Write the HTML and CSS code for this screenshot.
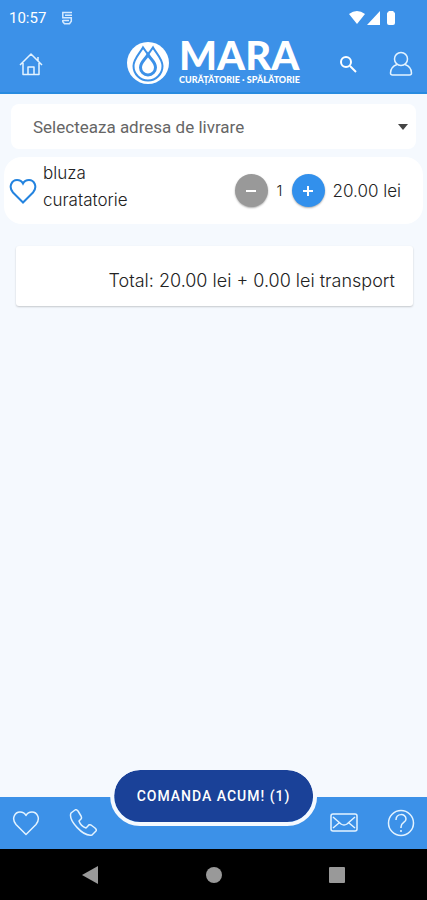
FILE: index.html
```html
<!DOCTYPE html>
<html lang="ro">
<head>
<meta charset="utf-8">
<meta name="viewport" content="width=device-width, initial-scale=1">
<title>Mara</title>
<link rel="stylesheet" href="styles.css">
</head>
<body>
<header class="header">
  <div class="status">
    <span class="status-left">
      <span class="clock">10:57</span>
      <svg width="12" height="14" viewBox="0 0 12 14" fill="none" stroke="#d5eaff" stroke-width="1.500"><path d="M11 1.500H1.800v5.300h8.500v3.500L8.500 12.800h-5L1.800 10.800V9M4 4.200h7M1.800 9.500H8"/></svg>
    </span>
    <svg width="50" height="16" viewBox="0 0 50 16" fill="currentColor"><path d="M0 4Q8-2 16 4L8 14ZM18 15 31 1V15ZM38 3.500q0-1.500 1.500-1.500V1h5v1q1.500 0 1.500 1.500V13q0 2-2 2h-4q-2 0-2-2Z"/></svg>
  </div>
  <div class="toolbar">
    <a class="icon home" href="#" aria-label="Acasa"><svg width="24" height="24" viewBox="0 0 24 24" class="line"><path d="M1 13 12 2 23 13M4 11v11.500h16V11M19 9V5M9 22v-7h6v7"/></svg></a>
    <a class="brand" href="#">
      <svg width="42" height="42" viewBox="0 0 42 42"><circle cx="21" cy="21" r="21" fill="#fff"/><path class="drop" d="M21 12.500 16 5.500C13 11 6.500 17 6.500 24a14.500 14.500 0 0 0 29 0C35.500 17 29 11 26 5.500Z"/><path class="drop inner" d="M21 12.500C18 18 13.500 20 13.500 25.500a7.500 7.500 0 0 0 15 0C28.500 20 24 18 21 12.500Z"/></svg>
      <span class="wordmark"><span class="name">MARA</span><span class="tagline">CURĂȚĂTORIE · SPĂLĂTORIE</span></span>
    </a>
    <span class="actions">
      <button class="icon" aria-label="Cauta"><svg width="18" height="18" viewBox="0 0 18 18" class="bold"><circle cx="7" cy="7" r="5"/><path d="m11 11 6 6"/></svg></button>
      <a class="icon" href="#" aria-label="Cont"><svg width="24" height="26" viewBox="0 0 24 26" class="line"><circle cx="12" cy="8" r="6.500"/><path d="M8 13.500C4 15 1.500 18 1.500 22q0 2 2 2h17q2 0 2-2c0-4-2.500-7-6.500-8.500"/></svg></a>
    </span>
  </div>
</header>

<main class="content">
  <div class="address">
    <select aria-label="Adresa de livrare"><option>Selecteaza adresa de livrare</option></select>
    <svg width="10" height="6" viewBox="0 0 10 6"><path d="M0 0h10L5 6Z"/></svg>
  </div>
  <section class="item">
    <button class="favorite" aria-label="Favorit"><svg width="28" height="26" viewBox="0 0 28 26"><path d="M14 24.500 4 14.500C-1 8.500 3 2 8 2c3 0 5 1.500 6 3.500C15 3.500 17 2 20 2c5 0 9 6.500 4 12.500Z"/></svg></button>
    <div class="item-name"><span>bluza</span><span>curatatorie</span></div>
    <div class="quantity">
      <button class="round minus" aria-label="Scade"><svg width="12" height="12" viewBox="0 0 12 12"><path d="M1 6h10"/></svg></button>
      <output>1</output>
      <button class="round plus" aria-label="Adauga"><svg width="12" height="12" viewBox="0 0 12 12"><path d="M1 6h10M6 1v10"/></svg></button>
    </div>
    <span class="price">20.00 lei</span>
  </section>
  <section class="total">Total: 20.00 lei + 0.00 lei transport</section>
</main>

<footer>
  <nav class="tabs">
    <span class="tab-group">
      <a class="icon" href="#" aria-label="Favorite"><svg width="28" height="26" viewBox="0 0 28 26" class="line"><path d="M14 24.500 4 14.500C-1 8.500 3 2 8 2c3 0 5 1.500 6 3.500C15 3.500 17 2 20 2c5 0 9 6.500 4 12.500Z"/></svg></a>
      <a class="icon" href="#" aria-label="Telefon"><svg width="28" height="28" viewBox="0 0 28 28" class="line"><path d="M6 1 2 4C-1 11 14 28 23 26l4-4q1-1-1-3l-4-3q-2-1-3 1l-2 2c-3-1-6-4-7-7l2-2q1-1 0-3L9 2Q7 0 6 1Z"/></svg></a>
    </span>
    <span class="tab-group">
      <a class="icon" href="#" aria-label="Mesaje"><svg width="28" height="20" viewBox="0 0 28 20" class="line"><rect x="1" y="1" width="26" height="17" rx="2"/><path d="m3 4 8 7q3 2 6 0l8-7M3 15l6-5M25 15l-6-5"/></svg></a>
      <a class="icon" href="#" aria-label="Ajutor"><svg width="28" height="28" viewBox="0 0 28 28" class="line"><circle cx="14" cy="14" r="12.500"/><path d="M9 11c0-7 10-7 10-1 0 4-5 3-5 8v1M14 21v2"/></svg></a>
    </span>
    <button class="order">COMANDA ACUM! (1)</button>
  </nav>
  <div class="system">
    <svg width="18" height="20" viewBox="0 0 18 20"><path d="M17 1v18L1 10Z"/></svg>
    <svg width="18" height="18" viewBox="0 0 18 18"><circle cx="9" cy="9" r="8"/></svg>
    <svg width="18" height="18" viewBox="0 0 18 18"><rect x="1" y="1" width="16" height="16" rx="1"/></svg>
  </div>
</footer>
</body>
</html>
```
FILE: styles.css
```css
* { box-sizing: border-box; }
body {
  margin: 0;
  min-height: 100vh;
  display: flex;
  flex-direction: column;
  background: #f5f9fe;
  color: #222;
  font-family: Inter, "Liberation Sans", sans-serif;
  font-size: 17px;
  font-weight: 300;
}
button { border: 0; padding: 0; background: none; color: inherit; font: inherit; }
a { color: inherit; text-decoration: none; }
svg { display: block; flex: none; }

.header { background: #3c91e8; color: #fff; border-bottom: 2px solid #288be0; }
.status {
  height: 36px;
  padding: 0 28px 0 9px;
  display: flex;
  align-items: center;
  justify-content: space-between;
  font-family: Roboto, sans-serif;
  font-weight: 400;
}
.status-left { display: flex; align-items: center; gap: 15px; }
.clock { font-size: 15px; }
.toolbar {
  height: 56px;
  padding: 0 14px;
  display: grid;
  grid-template-columns: 1fr auto 1fr;
  align-items: center;
}
.icon { display: grid; place-items: center; justify-self: start; }
.home { padding-left: 5px; }
.line { fill: none; stroke: #e3f3ff; stroke-width: 1.5; stroke-linejoin: round; }
.bold { fill: none; stroke: #fff; stroke-width: 2; }
.brand { display: flex; align-items: center; gap: 10px; margin-bottom: 3px; }
.drop { fill: #fff; stroke: #3c91e8; stroke-width: 2; }
.inner { stroke-width: 3; }
.wordmark { display: flex; flex-direction: column; font-family: Lato, sans-serif; font-weight: 900; }
.name { font-size: 40px; line-height: 34px; }
.tagline { font-size: 9px; line-height: 16px; }
.actions { display: flex; align-items: center; justify-content: flex-end; gap: 32px; }

.content { flex: 1; padding: 10px 4px; }
.address { display: grid; align-items: center; margin: 0 7px 8px; background: #fff; border-radius: 8px; }
.address select {
  grid-area: 1 / 1;
  width: 100%;
  height: 45px;
  padding: 0 22px;
  border: 0;
  appearance: none;
  background: transparent;
  color: #666;
  font-family: Roboto, sans-serif;
  font-size: 17px;
}
.address svg { grid-area: 1 / 1; justify-self: end; margin-right: 8px; fill: #444; pointer-events: none; }
.item {
  display: flex;
  align-items: center;
  min-height: 67px;
  padding: 0 22px 0 5px;
  background: #fff;
  border-radius: 18px;
}
.favorite { margin-right: 6px; }
.favorite path { fill: none; stroke: #2383df; stroke-width: 2; }
.item-name { flex: 1; display: flex; flex-direction: column; line-height: 27px; padding-bottom: 8px; }
.quantity { display: flex; align-items: center; gap: 8px; margin-right: 8px; }
.quantity output { width: 8px; text-align: center; font-size: 15px; }
.round { width: 33px; height: 33px; display: grid; place-items: center; border-radius: 50%; box-shadow: 0 1px 2px #0005; }
.round path { stroke: #fff; stroke-width: 2; }
.minus { background: #999; }
.plus { background: #3290ec; }
.total {
  margin: 22px 10px 0 12px;
  padding: 23px 18px 13px;
  border-radius: 3px;
  background: #fff;
  box-shadow: 0 1px 2px #0003;
  text-align: right;
  font-size: 18px;
  line-height: 24px;
}

.tabs {
  position: relative;
  height: 52px;
  padding: 0 12px;
  display: flex;
  align-items: center;
  justify-content: space-between;
  background: #3c91e8;
}
.tab-group { display: flex; align-items: center; gap: 29px; }
.order {
  position: absolute;
  left: 50%;
  bottom: 23px;
  transform: translateX(-50%);
  height: 60px;
  padding: 0 23px;
  border: 4px solid #f5f9fe;
  border-radius: 30px;
  background: #1a4198;
  background-clip: padding-box;
  color: #fff;
  font: 500 14px Roboto, sans-serif;
  letter-spacing: 1px;
  white-space: nowrap;
}
.system {
  height: 51px;
  padding: 0 81px;
  display: flex;
  align-items: center;
  justify-content: space-between;
  background: #000;
}
.system svg { fill: #999; }
```
